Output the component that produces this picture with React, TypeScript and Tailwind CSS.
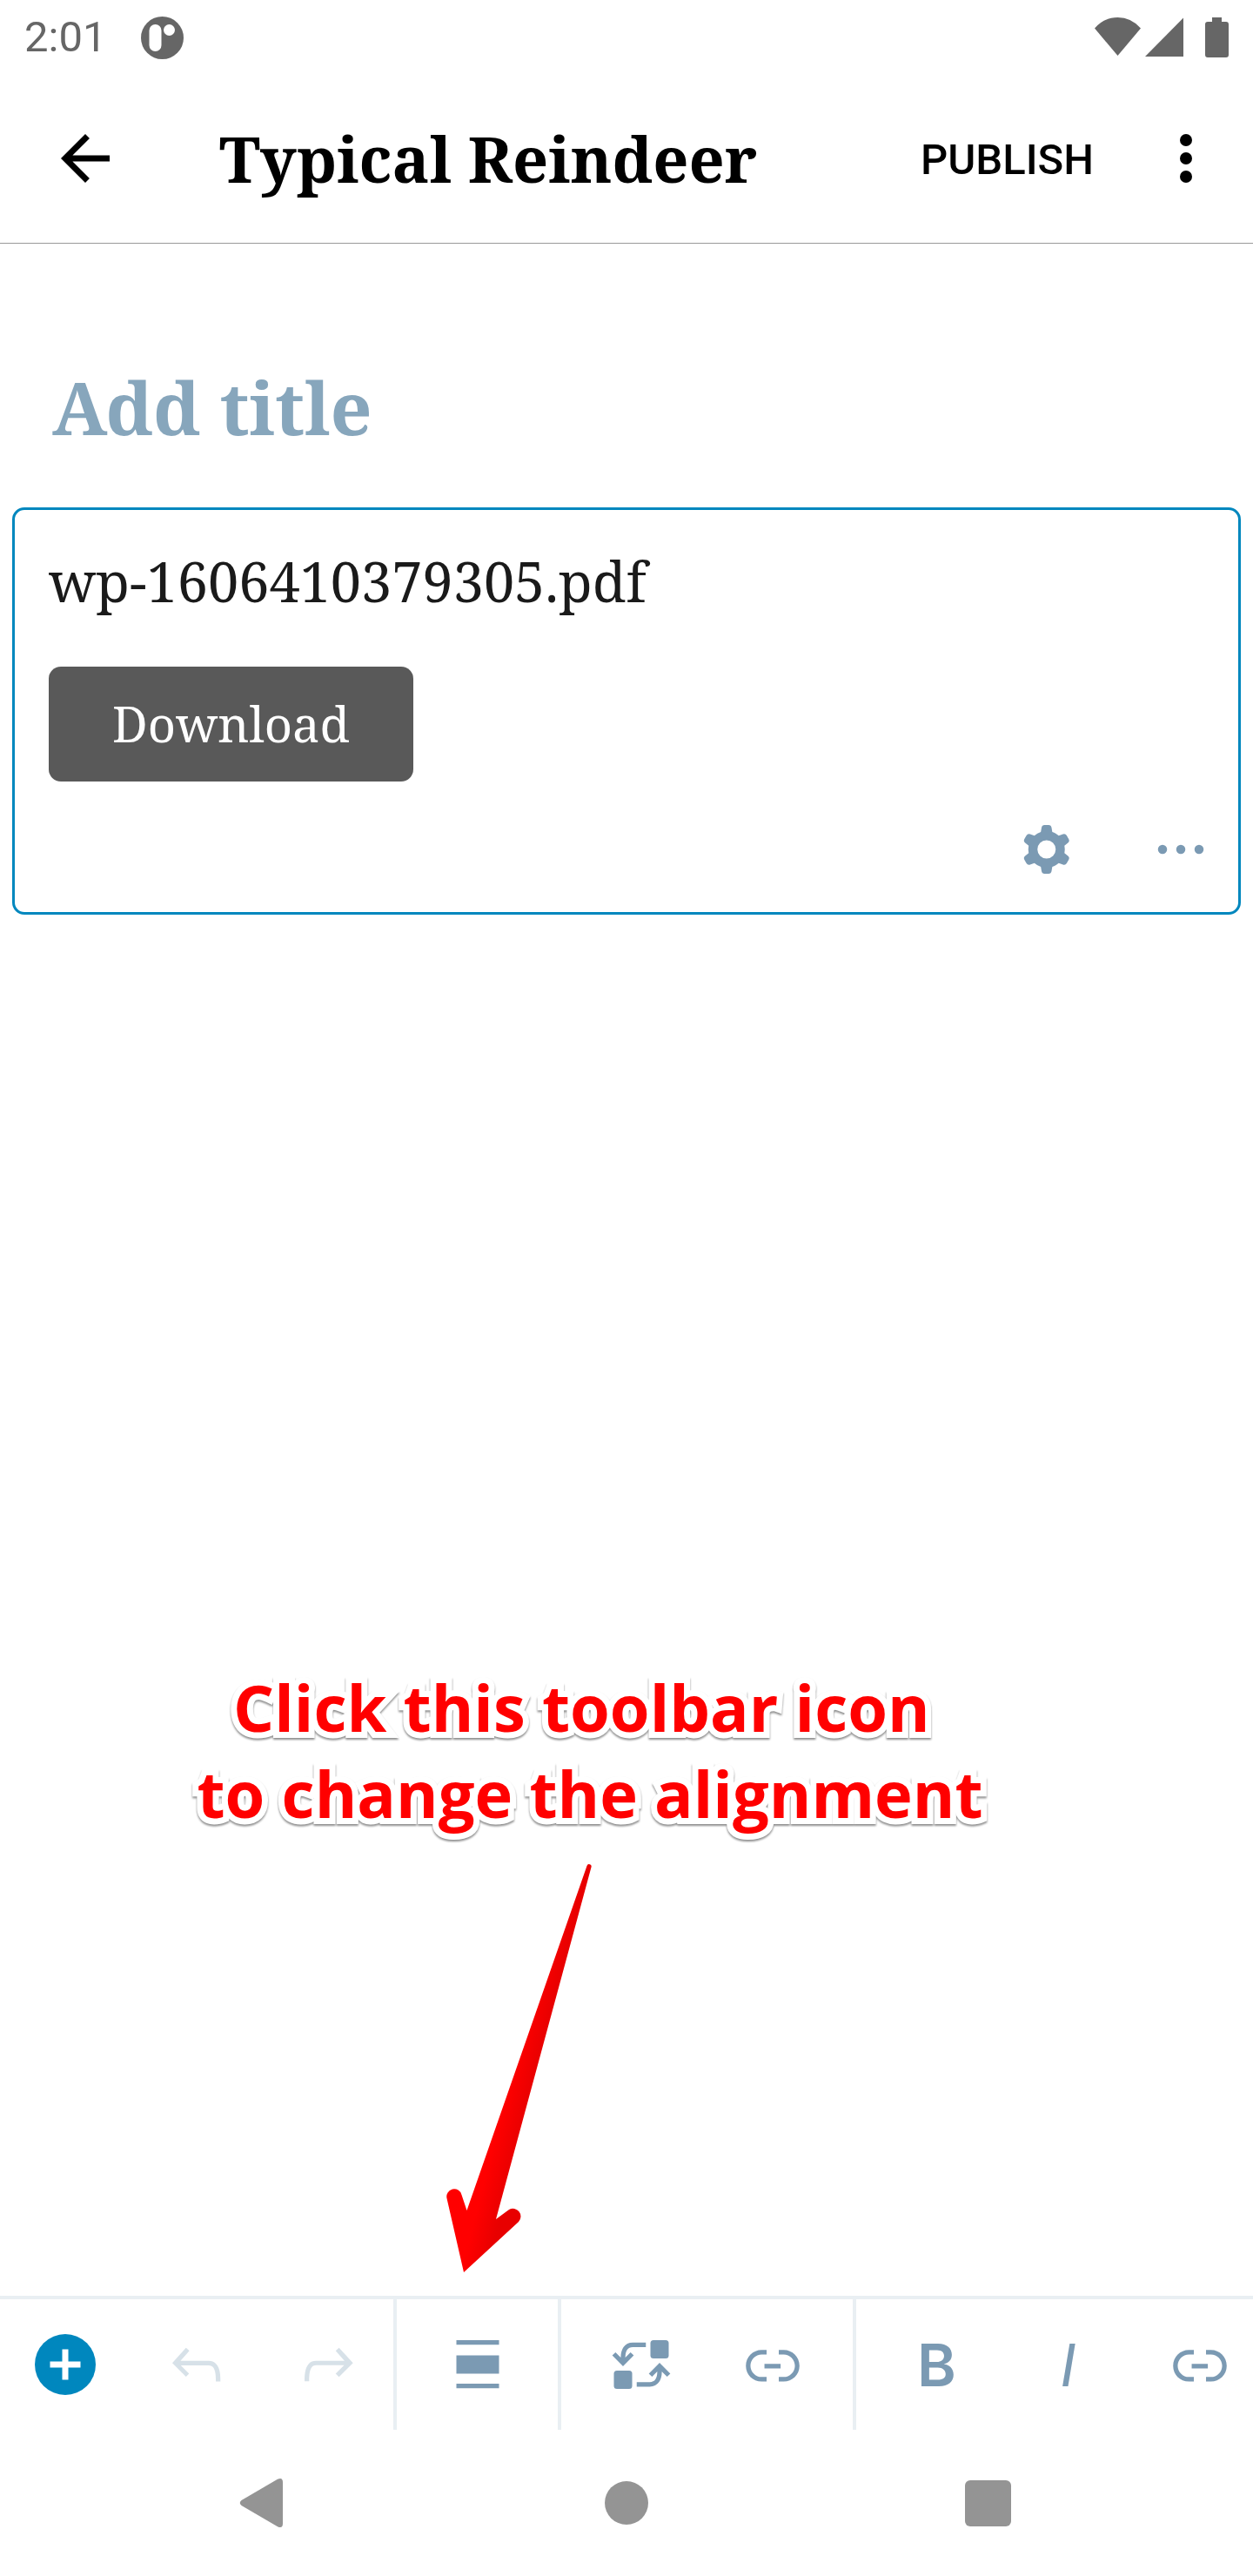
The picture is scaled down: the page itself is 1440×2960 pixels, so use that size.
import type { ReactNode } from 'react';

const serif = "font-['Noto_Serif','Droid_Serif','DejaVu_Serif_Condensed','DejaVu_Serif',serif]";

function Icon({ children, className = '' }: { children: ReactNode; className?: string }) {
  return (
    <svg viewBox="0 0 24 24" fill="currentColor" aria-hidden="true" className={`size-[84px] shrink-0 ${className}`}>
      {children}
    </svg>
  );
}

function ToolButton({ label, disabled, children }: { label: string; disabled?: boolean; children: ReactNode }) {
  return (
    <button
      type="button"
      aria-label={label}
      disabled={disabled}
      className="flex h-full w-[151px] shrink items-center justify-center text-[#7b9ab3] disabled:text-[#d7e1e8]"
    >
      {children}
    </button>
  );
}

const linkPath =
  'M15.6 7.2H14v1.5h1.6c2 0 3.7 1.7 3.7 3.7s-1.7 3.7-3.7 3.7H14v1.5h1.6c2.8 0 5.2-2.3 5.2-5.2 0-2.9-2.3-5.2-5.2-5.2zM4.7 12.4c0-2 1.7-3.7 3.7-3.7H10V7.2H8.4c-2.9 0-5.2 2.3-5.2 5.2 0 2.9 2.3 5.2 5.2 5.2H10v-1.5H8.4c-2 0-3.7-1.7-3.7-3.7zm4.6.9h5.3v-1.5H9.3v1.5z';

function StatusBar() {
  return (
    <div className="flex h-[84px] items-center justify-between px-7 pt-0.5 text-[#666666]">
      <div className="flex items-center gap-10">
        <span className="font-[Roboto,sans-serif] text-[49px] leading-[56px]">2:01</span>
        <svg viewBox="0 0 49 49" className="size-[49px]" aria-hidden="true">
          <circle cx="24.5" cy="24.5" r="24.5" fill="currentColor" />
          <rect x="9.5" y="9" width="14" height="31" rx="7" fill="#fff" />
          <circle cx="32.5" cy="15.5" r="6.5" fill="#fff" />
        </svg>
      </div>
      <svg viewBox="0 0 154 46" fill="currentColor" className="h-[46px] w-[154px]" aria-hidden="true">
        <path d="M0 12.5Q11 0 26.500 0T53 12.500L26.500 44z" />
        <path d="M102 0.500V45H58z" />
        <path d="M135 0h11v5h5q3 0 3 3v35q0 3-3 3h-21q-3 0-3-3V8q0-3 3-3h5z" />
      </svg>
    </div>
  );
}

function Header() {
  return (
    <header className="flex h-[196px] items-center border-b border-[#999999] pr-[35px] pl-14">
      <button type="button" aria-label="Back">
        <Icon>
          <path d="M20 11H7.830l5.590-5.590L12 4l-8 8 8 8 1.410-1.410L7.830 13H20v-2z" />
        </Icon>
      </button>
      <h1 className={`ml-28 flex-1 text-[72px] leading-[96px] font-bold text-black ${serif}`}>Typical Reindeer</h1>
      <button type="button" className="pt-1 font-[Roboto,sans-serif] text-[49px] leading-[56px] font-medium text-black">
        PUBLISH
      </button>
      <button type="button" aria-label="More options" className="ml-16">
        <Icon>
          <circle cx="12" cy="6" r="2" />
          <circle cx="12" cy="12" r="2" />
          <circle cx="12" cy="18" r="2" />
        </Icon>
      </button>
    </header>
  );
}

function FileBlock() {
  return (
    <section className="mx-3.5 mt-[58px] rounded-[14px] border-[3px] border-[#0087be] px-[39px] pt-[39px] pb-[30px]">
      <p className={`text-[63px] leading-[86px] text-[#1a1a1a] ${serif}`}>wp-1606410379305.pdf</p>
      <button
        type="button"
        className={`mt-[55px] rounded-[14px] bg-[#595959] px-[73px] pt-[27px] pb-[29px] text-[56px] leading-[76px] text-white ${serif}`}
      >
        Download
      </button>
      <div className="-mr-[15px] mt-9 flex justify-end gap-[70px] text-[#7b9ab3]">
        <button type="button" aria-label="Block settings">
          <Icon>
            <path
              fillRule="evenodd"
              d="M10.289 4.836A1 1 0 0111.275 4h1.306a1 1 0 01.987.836l.244 1.466c.787.26 1.503.679 2.108 1.218l1.393-.522a1 1 0 011.216.437l.653 1.130a1 1 0 01-.23 1.273l-1.148.944a6.025 6.025 0 010 2.435l1.149.946a1 1 0 01.23 1.272l-.653 1.130a1 1 0 01-1.216.437l-1.394-.522c-.605.54-1.320.958-2.108 1.218l-.244 1.466a1 1 0 01-.987.836h-1.306a1 1 0 01-.986-.836l-.244-1.466a5.995 5.995 0 01-2.108-1.218l-1.394.522a1 1 0 01-1.217-.436l-.653-1.131a1 1 0 01.23-1.272l1.149-.946a6.026 6.026 0 010-2.435l-1.148-.944a1 1 0 01-.23-1.272l.653-1.131a1 1 0 011.217-.437l1.393.522a5.994 5.994 0 012.108-1.218l.244-1.466zM14.929 12a3 3 0 11-6 0 3 3 0 016 0z"
            />
          </Icon>
        </button>
        <button type="button" aria-label="More block actions">
          <Icon>
            <circle cx="6" cy="12" r="1.5" />
            <circle cx="12" cy="12" r="1.5" />
            <circle cx="18" cy="12" r="1.5" />
          </Icon>
        </button>
      </div>
    </section>
  );
}

function Callout() {
  return (
    <aside className="mt-auto pb-[26px]">
      <p className="pr-[84px] text-center font-['Open_Sans','Noto_Sans',sans-serif] text-[74px] leading-[99px] font-bold text-[#ff0000] drop-shadow-[0_2px_1px_rgba(0,0,0,0.45)] [-webkit-text-stroke:14px_white] [paint-order:stroke_fill] [stroke-linejoin:round]">
        Click this toolbar icon&nbsp;
        <br />
        to change the alignment
      </p>
      <svg viewBox="0 0 170 472" className="mt-[30px] ml-[513px] h-[472px] w-[170px]" aria-hidden="true">
        <defs>
          <linearGradient id="shaft" gradientUnits="userSpaceOnUse" x1="62" y1="290" x2="90" y2="297">
            <stop offset="0" stopColor="#ff0000" />
            <stop offset="1" stopColor="#e80000" />
          </linearGradient>
        </defs>
        <path
          d="M20 471L0.500 386A8.700 8.700 0 0 1 17.500 382L23.500 400L161.500 4A2.600 2.600 0 0 1 166.500 5.500L57 410L72 399A9 9 0 0 1 83 413Z"
          fill="url(#shaft)"
        />
      </svg>
    </aside>
  );
}

function EditorToolbar() {
  return (
    <div role="toolbar" aria-label="Editor" className="flex h-[154px] overflow-hidden border-t-4 border-[#e9eff3]">
      <div className="flex w-[456px] shrink-0 border-r-4 border-[#e9eff3]">
        <ToolButton label="Add block">
          <Icon>
            <circle cx="12" cy="12" r="10" fill="#0087be" />
            <path d="M11 7h2v4h4v2h-4v4h-2v-4H7v-2h4z" fill="#fff" />
          </Icon>
        </ToolButton>
        <ToolButton label="Undo" disabled>
          <Icon>
            <path d="M18.300 11.700c-.6-.6-1.400-.9-2.300-.9H6.700l2.900-3.300-1.100-1-4.500 5L8.500 16l1-1-2.700-2.700H16c.5 0 .9.2 1.300.5 1 1 1 3.400 1 4.500v.3h1.500v-.2c0-1.500 0-4.300-1.500-5.700z" />
          </Icon>
        </ToolButton>
        <ToolButton label="Redo" disabled>
          <Icon>
            <path d="M15.600 6.500l-1.100 1 2.900 3.300H8c-.9 0-1.700.3-2.300.9-1.400 1.500-1.400 4.200-1.400 5.600v.2h1.500v-.3c0-1.100 0-3.500 1-4.500.3-.3.7-.5 1.300-.5h9.200L14.500 15l1.100 1.100 4.600-4.600-4.600-5z" />
          </Icon>
        </ToolButton>
      </div>
      <div className="flex w-[189px] shrink-0 justify-center border-r-4 border-[#e9eff3]">
        <ToolButton label="Change alignment">
          <Icon>
            <path d="M5 4h14v1.500H5zM5 9h14v6H5zM5 18.300h14v1.500H5z" />
          </Icon>
        </ToolButton>
      </div>
      <div className="flex w-[339px] shrink-0 justify-center border-r-4 border-[#e9eff3]">
        <ToolButton label="Replace file">
          <Icon>
            <rect x="15" y="4" width="6" height="6" rx="1" />
            <rect x="3" y="14" width="6" height="6" rx="1" />
            <g fill="none" stroke="currentColor" strokeWidth="1.500">
              <path d="M13.500 5.500H9.200C7 5.500 6 7.300 6 9.700v1.800M3 8.500l3 3 3-3" />
              <path d="M10.500 18.500h4.300c2.200 0 3.200-1.800 3.200-4.200v-1.800M15 15.500l3-3 3 3" />
            </g>
          </Icon>
        </ToolButton>
        <ToolButton label="Link to file">
          <Icon>
            <path d={linkPath} />
          </Icon>
        </ToolButton>
      </div>
      <div className="flex shrink-0 pl-[17px]">
        <ToolButton label="Bold">
          <span className="font-[Inter,sans-serif] text-[68px] leading-[84px] font-semibold">B</span>
        </ToolButton>
        <ToolButton label="Italic">
          <span className="font-[Inter,sans-serif] text-[68px] leading-[84px] italic">I</span>
        </ToolButton>
        <ToolButton label="Link">
          <Icon>
            <path d={linkPath} />
          </Icon>
        </ToolButton>
      </div>
    </div>
  );
}

function SystemNav() {
  const button = 'flex w-[415px] items-center justify-center';
  return (
    <nav aria-label="System" className="flex h-[168px] justify-center text-[#949494]">
      <button type="button" aria-label="Back" className={button}>
        <svg viewBox="0 0 84 84" fill="currentColor" className="size-[84px]">
          <path d="M14.500 39L56 14.800Q62 12 62 18.500V65.500Q62 72 56 69.200L14.500 45Q11 42 14.500 39z" />
        </svg>
      </button>
      <button type="button" aria-label="Home" className={button}>
        <span className="size-[50px] rounded-full bg-current" />
      </button>
      <button type="button" aria-label="Recent apps" className={button}>
        <span className="size-[53px] rounded-md bg-current" />
      </button>
    </nav>
  );
}

export default function App() {
  return (
    <div className="flex min-h-screen flex-col bg-white">
      <StatusBar />
      <Header />
      <main className="flex flex-1 flex-col">
        <input
          type="text"
          aria-label="Post title"
          placeholder="Add title"
          className={`mt-[130px] h-[115px] w-full bg-transparent px-[60px] text-[84px] leading-[115px] font-bold text-[#1a1a1a] outline-none placeholder:text-[#87a6bc] placeholder:opacity-100 ${serif}`}
        />
        <FileBlock />
        <Callout />
      </main>
      <EditorToolbar />
      <SystemNav />
    </div>
  );
}
